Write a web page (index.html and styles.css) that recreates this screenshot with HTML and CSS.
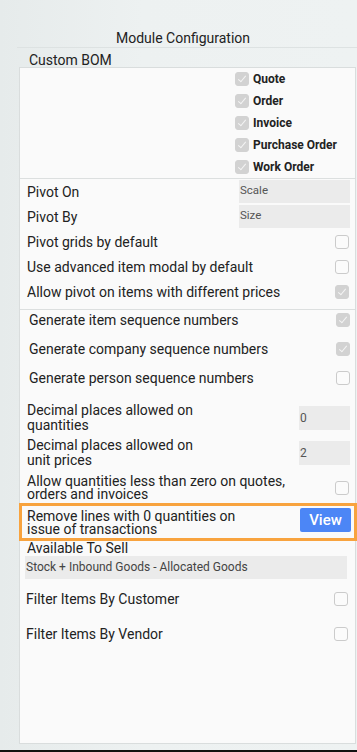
FILE: index.html
```html
<!DOCTYPE html>
<html lang="en">
<head>
  <meta charset="UTF-8" />
  <meta name="viewport" content="width=device-width, initial-scale=1.0" />
  <title>Module Configuration</title>
  <link rel="stylesheet" href="styles.css">
</head>
<body>
  <div class="page">
    <h2 class="title">Module Configuration</h2>
    <div class="group-name">Custom BOM</div>

    <div class="panel">
      <div class="bom">
        <label class="bom-row"><span class="box on dis"></span>Quote</label>
        <label class="bom-row"><span class="box on dis"></span>Order</label>
        <label class="bom-row"><span class="box on dis"></span>Invoice</label>
        <label class="bom-row"><span class="box on dis"></span>Purchase Order</label>
        <label class="bom-row"><span class="box on dis"></span>Work Order</label>
      </div>

      <div class="section pivot">
        <div class="row field-row">
          <span class="label">Pivot On</span>
          <span class="field wide">Scale</span>
        </div>
        <div class="row field-row">
          <span class="label">Pivot By</span>
          <span class="field wide">Size</span>
        </div>
        <div class="row check-row">
          <span class="label">Pivot grids by default</span>
          <span class="box"></span>
        </div>
        <div class="row check-row">
          <span class="label">Use advanced item modal by default</span>
          <span class="box"></span>
        </div>
        <div class="row check-row">
          <span class="label">Allow pivot on items with different prices</span>
          <span class="box on dis"></span>
        </div>
      </div>

      <div class="seq">
        <div class="row seq-row">
          <span class="label">Generate item sequence numbers</span>
          <span class="box on dis"></span>
        </div>
        <div class="row seq-row">
          <span class="label">Generate company sequence numbers</span>
          <span class="box on dis"></span>
        </div>
        <div class="row seq-row">
          <span class="label">Generate person sequence numbers</span>
          <span class="box"></span>
        </div>
      </div>

      <div class="decimals">
        <div class="row dec-row">
          <span class="label two-line dec-label">Decimal places allowed on quantities</span>
          <span class="field small">0</span>
        </div>
        <div class="row dec-row">
          <span class="label two-line dec-label">Decimal places allowed on unit prices</span>
          <span class="field small">2</span>
        </div>
        <div class="row neg-row">
          <span class="label tight neg-label">Allow quantities less than zero on quotes, orders and invoices</span>
          <span class="box"></span>
        </div>
      </div>

      <div class="highlight">
        <span class="label tight remove-label">Remove lines with 0 quantities on issue of transactions</span>
        <button class="view-btn" type="button">View</button>
      </div>

      <div class="ats">
        <div class="ats-label">Available To Sell</div>
        <div class="ats-field">Stock + Inbound Goods - Allocated Goods</div>
      </div>

      <div class="filters">
        <div class="row filter-row">
          <span class="label">Filter Items By Customer</span>
          <span class="box"></span>
        </div>
        <div class="row filter-row">
          <span class="label">Filter Items By Vendor</span>
          <span class="box"></span>
        </div>
      </div>
    </div>
  </div>
  <div class="bottom-bar"></div>
</body>
</html>
```

FILE: styles.css
```css
body {
  margin: 0;
  font-family: Roboto, "Noto Sans", sans-serif;
  color: #222;
  background: linear-gradient(to right, #e6ebeb, #edf1f1 40%, #eef2f2);
  height: 752px;
  overflow: hidden;
}
.page {
  padding-left: 17px;
  height: 750px;
}
.title {
  margin: 0;
  padding: 29px 8px 0 0;
  line-height: 18px;
  font-size: 14px;
  font-weight: 400;
  text-align: center;
  color: #222;
  border-bottom: 1px solid #dde2e2;
}
.group-name {
  padding: 6px 0 0 12px;
  line-height: 13px;
  height: 13px;
  font-size: 14px;
}
.panel {
  margin-left: 2px;
  width: 337px;
  height: 677px;
  box-sizing: border-box;
  background: #fafafa;
  border: 1px solid #d9dddd;
}

/* checkboxes */
.box {
  position: relative;
  display: inline-block;
  flex: none;
  width: 12px;
  height: 12px;
  border: 1px solid #cbcbcb;
  border-radius: 3px;
  background: #fbfbfb;
}
.box.on {
  border-color: #d2d2d2;
  background: #d2d2d2;
}
.box.on::after {
  content: "";
  position: absolute;
  left: 4px;
  top: 1px;
  width: 3px;
  height: 7px;
  border: solid #f4f4f4;
  border-width: 0 1.5px 1.5px 0;
  transform: rotate(40deg);
}

/* custom BOM list */
.bom {
  padding-left: 215px;
  border-bottom: 1px solid #dcdfdf;
}
.bom-row {
  display: flex;
  align-items: center;
  gap: 4px;
  height: 22px;
  font-size: 12px;
  font-weight: 700;
}

/* generic rows */
.row {
  display: flex;
  align-items: center;
  justify-content: space-between;
  padding: 0 6px 0 7px;
  font-size: 14px;
}
.label {
  line-height: 16px;
}
.field {
  box-sizing: border-box;
  background: #ebebeb;
  color: #555;
  font-size: 11.5px;
  padding-left: 1px;
}
.field.wide {
  width: 111px;
  height: 23px;
  line-height: 21px;
  margin-right: -1px;
}
.field.small {
  width: 51px;
  height: 24px;
  line-height: 24px;
  font-size: 12px;
  margin-right: -1px;
}

.section.pivot {
  padding-bottom: 5px;
  border-bottom: 1px solid #dcdfdf;
}
.field-row,
.check-row {
  height: 25px;
}

.seq {
  display: flex;
  flex-direction: column;
  gap: 9px;
}
.seq-row {
  height: 20px;
  padding-left: 9px;
  padding-right: 5px;
}

.decimals {
  padding-top: 12px;
}
.dec-row {
  height: 35px;
}
.two-line {
  line-height: 15px;
}
.dec-label {
  width: 185px;
}
.neg-row {
  height: 26px;
  margin-top: 5px;
}
.tight {
  line-height: 13px;
}
.neg-label {
  width: 280px;
}

/* highlighted row */
.highlight {
  display: flex;
  justify-content: space-between;
  align-items: center;
  height: 38px;
  box-sizing: border-box;
  margin: 2px -2px 0 -1px;
  padding: 0 3px 0 5px;
  border: 3px solid #f8a33e;
  font-size: 14px;
}
.remove-label {
  width: 228px;
  margin-top: 1px;
}
.view-btn {
  width: 51px;
  height: 24px;
  margin-top: -5px;
  border: none;
  border-radius: 2px;
  background: #4c86f6;
  color: #fff;
  font-family: Roboto, sans-serif;
  font-size: 15px;
  font-weight: 500;
}

/* available to sell */
.ats-label {
  padding-left: 7px;
  height: 15px;
  line-height: 15px;
  font-size: 14px;
}
.ats-field {
  margin-left: 5px;
  width: 322px;
  height: 23px;
  line-height: 23px;
  padding-left: 1px;
  box-sizing: border-box;
  background: #ebebeb;
  color: #444;
  font-size: 12px;
}

.filters {
  padding-top: 2px;
}
.filter-row {
  height: 35px;
  padding-left: 6px;
  padding-right: 7px;
}

.bottom-bar {
  height: 2px;
  background: #111;
}
```
